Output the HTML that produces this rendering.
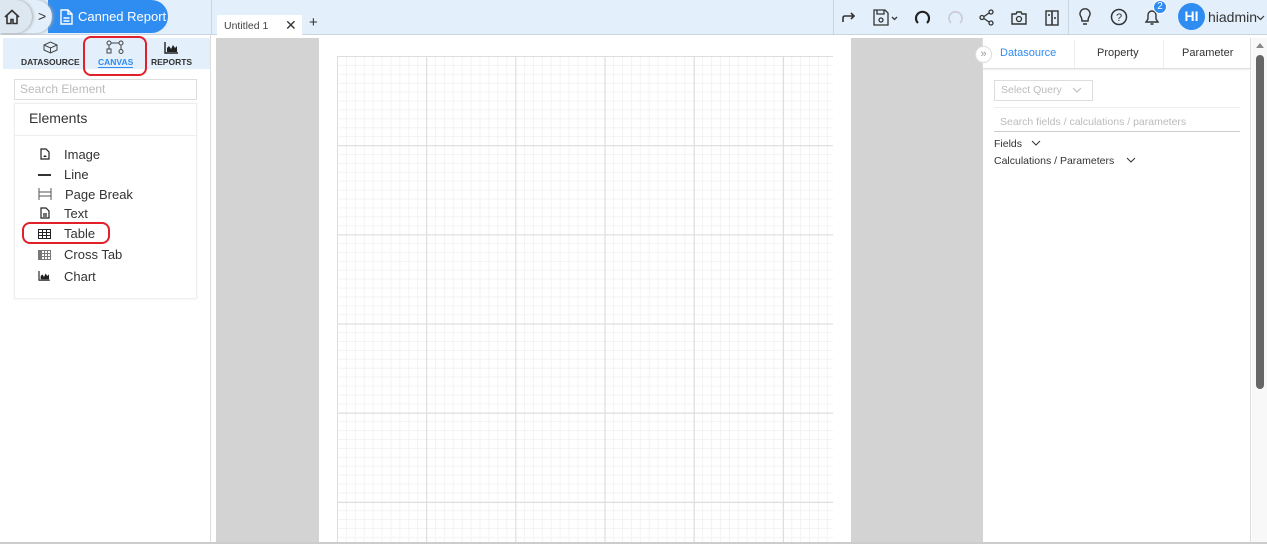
<!DOCTYPE html>
<html><head><meta charset="utf-8"><style>
*{box-sizing:border-box;margin:0;padding:0}
body{width:1267px;height:544px;overflow:hidden;background:#fff;font-family:"Liberation Sans",sans-serif;position:relative;color:#333}
.abs{position:absolute}
.top{left:0;top:0;width:1267px;height:35px;background:#e3f0fb;border-bottom:1px solid #c9d6e2}
.left{left:0;top:35px;width:211px;height:509px;background:#fff;border-right:1px solid #ddd}
.el{position:absolute;left:64px;font-size:13px;color:#333}
.grid{left:337px;top:56px;width:496px;height:488px;border-left:1px solid #ddd;border-top:1px solid #ddd;
background-image:linear-gradient(#dcdcdc 1px,transparent 1px),linear-gradient(90deg,#dcdcdc 1px,transparent 1px),linear-gradient(#f3f3f3 1px,transparent 1px),linear-gradient(90deg,#f3f3f3 1px,transparent 1px);
background-size:89.2px 89.2px,89.2px 89.2px,8.92px 8.92px,8.92px 8.92px;background-position:-1px -1px}
</style></head><body>
<div class="abs top"></div>
<div class="abs" style="left:48px;top:0;width:120px;height:33px;border-radius:0 17px 17px 0;background:#2f8cf0"></div>
<div class="abs" style="left:0;top:0;width:52px;height:33px;border-radius:0 17px 17px 0;background:#e3f0fb;box-shadow:1px 0 3px #aaa"></div>
<div class="abs" style="left:0;top:0;width:32px;height:33px;border-radius:0 17px 17px 0;background:#dde7f0;box-shadow:1px 0 3px #aaa"></div>
<svg class="abs" style="left:3px;top:8px" width="18" height="18" viewBox="0 0 18 18"><path d="M2 9L9 2.5 16 9M4 7.5V15.5h4v-4h2v4h4V7.5" fill="none" stroke="#333" stroke-width="1.6"/></svg>
<div class="abs" style="left:38px;top:8px;font-size:14px;color:#333">&gt;</div>
<svg class="abs" style="left:60px;top:9px" width="13" height="16" viewBox="0 0 13 16"><path d="M1 1h7l4 4v10H1z M8 1v4h4 M3.5 9h6M3.5 12h6" fill="none" stroke="#fff" stroke-width="1.4"/></svg>
<div class="abs" style="left:78px;top:9px;font-size:13px;color:#fff;white-space:nowrap">Canned Report</div>
<div class="abs" style="left:211px;top:0;width:1px;height:35px;background:#c9d6e2"></div>
<div class="abs" style="left:217px;top:15px;width:85px;height:20px;background:#fff"></div>
<div class="abs" style="left:224px;top:20px;font-size:10.5px;color:#444">Untitled 1</div>
<div class="abs" style="left:285px;top:17px;font-size:14px;color:#333">✕</div>
<div class="abs" style="left:309px;top:14px;font-size:15px;color:#333">+</div>
<div class="abs" style="left:833px;top:0;width:1px;height:35px;background:#c9d6e2"></div>
<div class="abs" style="left:1068px;top:0;width:1px;height:35px;background:#c9d6e2"></div>
<svg class="abs" style="left:842px;top:11px" width="14" height="12" viewBox="0 0 14 12"><path d="M1 11V7q0-2 2-2h9M9 2l3 3-3 3" fill="none" stroke="#333" stroke-width="1.6"/></svg>
<svg class="abs" style="left:873px;top:9px" width="26" height="17" viewBox="0 0 26 17"><path d="M1 1h11l3 3v12H1z M4 1v4h7V1 M8 11m-2 0a2 2 0 1 0 4 0a2 2 0 1 0-4 0 M19 8l2.5 2.5L24 8" fill="none" stroke="#333" stroke-width="1.3"/></svg>
<svg class="abs" style="left:914px;top:9px" width="17" height="17" viewBox="0 0 17 17"><path d="M4 14A6.5 6.5 0 1 1 13 14" fill="none" stroke="#222" stroke-width="2.2"/></svg>
<svg class="abs" style="left:947px;top:9px" width="17" height="17" viewBox="0 0 17 17"><path d="M4 14A6.5 6.5 0 1 1 13 14" fill="none" stroke="#ccd" stroke-width="1.8"/></svg>
<svg class="abs" style="left:979px;top:9px" width="15" height="17" viewBox="0 0 15 17"><circle cx="12" cy="3" r="2" fill="none" stroke="#333" stroke-width="1.3"/><circle cx="3" cy="8.5" r="2" fill="none" stroke="#333" stroke-width="1.3"/><circle cx="12" cy="14" r="2" fill="none" stroke="#333" stroke-width="1.3"/><path d="M5 7.5l5-3.5M5 9.5l5 3.5" stroke="#333" stroke-width="1.3"/></svg>
<svg class="abs" style="left:1011px;top:11px" width="16" height="14" viewBox="0 0 16 14"><path d="M1 3h4l1-2h4l1 2h4v10H1z" fill="none" stroke="#333" stroke-width="1.4"/><circle cx="8" cy="8" r="2.5" fill="none" stroke="#333" stroke-width="1.3"/></svg>
<svg class="abs" style="left:1045px;top:10px" width="14" height="16" viewBox="0 0 14 16"><rect x="1" y="1" width="12" height="14" fill="none" stroke="#333" stroke-width="1.4"/><path d="M7 1v14M3 5h2M9 8l2 0" stroke="#333" stroke-width="1.6"/></svg>
<svg class="abs" style="left:1078px;top:8px" width="14" height="19" viewBox="0 0 14 19"><path d="M4 13Q4 10 2.5 8A5 5 0 1 1 11.5 8Q10 10 10 13zM5 16h4" fill="none" stroke="#333" stroke-width="1.4"/></svg>
<svg class="abs" style="left:1110px;top:8px" width="18" height="18" viewBox="0 0 18 18"><circle cx="9" cy="9" r="7.5" fill="none" stroke="#333" stroke-width="1.5"/><text x="9" y="13" font-size="11" text-anchor="middle" fill="#333" font-family="Liberation Sans">?</text></svg>
<svg class="abs" style="left:1144px;top:8px" width="16" height="18" viewBox="0 0 16 18"><path d="M2 14h12l-2-3V7A4 4 0 0 0 4 7v4zM6.5 16h3" fill="none" stroke="#333" stroke-width="1.4"/></svg>
<div class="abs" style="left:1153px;top:0;width:14px;height:14px;border-radius:50%;background:#2f8cf0;border:1px solid #fff;color:#fff;font-size:10px;text-align:center;line-height:12px">2</div>
<div class="abs" style="left:1178px;top:3px;width:27px;height:27px;border-radius:50%;background:#2f8cf0;color:#fff;font-size:14px;font-weight:bold;text-align:center;line-height:27px">HI</div>
<div class="abs" style="left:1208px;top:9px;font-size:14px;color:#333">hiadmin</div>
<svg class="abs" style="left:1256px;top:15px" width="9" height="6" viewBox="0 0 9 6"><path d="M1 1l3.5 3.5L8 1" fill="none" stroke="#333" stroke-width="1.2"/></svg>
<div class="abs left"></div>
<div class="abs" style="left:3px;top:38px;width:207px;height:31px;background:#e3f0fb"></div>
<svg class="abs" style="left:43px;top:41px" width="15" height="13" viewBox="0 0 15 13"><path d="M1 4l6.5-3 6.5 3v5l-6.5 3L1 9z M1 4l6.5 3 6.5-3 M7.5 7v5" fill="none" stroke="#444" stroke-width="1"/></svg>
<div class="abs" style="left:21px;top:57px;font-size:8.5px;font-weight:bold;color:#333">DATASOURCE</div>
<svg class="abs" style="left:106px;top:40px" width="18" height="15" viewBox="0 0 18 15"><circle cx="3" cy="3" r="2" fill="none" stroke="#444"/><circle cx="15" cy="3" r="2" fill="none" stroke="#444"/><path d="M5 3h8M3 5v4M15 5v4" stroke="#444"/><rect x="1" y="9" width="4" height="4" fill="none" stroke="#444"/><circle cx="15" cy="11.5" r="2" fill="none" stroke="#444"/></svg>
<div class="abs" style="left:98px;top:57px;font-size:8.5px;font-weight:bold;color:#2f8cf0">CANVAS</div>
<div class="abs" style="left:98px;top:67px;width:35px;height:1px;background:#2f8cf0"></div>
<div class="abs" style="left:83px;top:36px;width:64px;height:40px;border:2px solid #e2202a;border-radius:8px"></div>
<svg class="abs" style="left:164px;top:42px" width="14" height="12" viewBox="0 0 14 12"><path d="M1 0v11h13" stroke="#222" stroke-width="1.4" fill="none"/><path d="M3 10V6l2-2 2 3 2-4 2 3 2-2v6z" fill="#222"/></svg>
<div class="abs" style="left:151px;top:57px;font-size:8.5px;font-weight:bold;color:#333">REPORTS</div>
<div class="abs" style="left:14px;top:79px;width:183px;height:21px;border:1px solid #ddd"></div>
<div class="abs" style="left:20px;top:82px;font-size:12px;color:#bbb">Search Element</div>
<div class="abs" style="left:14px;top:103px;width:183px;height:196px;border:1px solid #eee;box-shadow:0 0 2px #eee"></div>
<div class="abs" style="left:14px;top:135px;width:183px;height:1px;background:#eee"></div>
<div class="abs" style="left:29px;top:110px;font-size:14px;color:#333">Elements</div>
<svg class="abs" style="left:40px;top:148px" width="10" height="12" viewBox="0 0 10 12"><path d="M1 1h5l3 3v7H1z" fill="none" stroke="#222" stroke-width="1.2"/><path d="M3 9l2-2 2 2z" fill="#222"/></svg>
<div class="el" style="top:147px">Image</div>
<div class="abs" style="left:38px;top:174px;width:13px;height:1.5px;background:#333"></div>
<div class="el" style="top:167px">Line</div>
<svg class="abs" style="left:38px;top:188px" width="14" height="12" viewBox="0 0 14 12"><path d="M1 0v12M13 0v12M1 4h12M1 8h12" stroke="#555" stroke-width="1"/></svg>
<div class="el" style="left:65px;top:187px">Page Break</div>
<svg class="abs" style="left:40px;top:207px" width="10" height="12" viewBox="0 0 10 12"><path d="M1 1h5l3 3v7H1z M3 7h4M3 9h4" fill="none" stroke="#222" stroke-width="1.2"/></svg>
<div class="el" style="top:206px">Text</div>
<svg class="abs" style="left:38px;top:229px" width="13" height="10" viewBox="0 0 13 10"><rect x=".5" y=".5" width="12" height="9" fill="none" stroke="#222"/><path d="M.5 3.5h12M.5 6.5h12M4.5 .5v9M8.5 .5v9" stroke="#222"/></svg>
<div class="el" style="top:226px">Table</div>
<div class="abs" style="left:22px;top:222px;width:88px;height:22px;border:2px solid #e2202a;border-radius:8px"></div>
<svg class="abs" style="left:38px;top:250px" width="13" height="10" viewBox="0 0 13 10"><rect x=".5" y=".5" width="12" height="9" fill="none" stroke="#777"/><path d="M.5 3.5h12M.5 6.5h12M3.5 .5v9M6.5 .5v9M9.5 .5v9" stroke="#777"/><rect x="0" y="0" width="3" height="10" fill="#777"/></svg>
<div class="el" style="top:247px">Cross Tab</div>
<svg class="abs" style="left:38px;top:271px" width="12" height="10" viewBox="0 0 14 12"><path d="M1 0v11h13" stroke="#222" stroke-width="1.4" fill="none"/><path d="M3 10V6l2-2 2 3 2-4 2 3 2-2v6z" fill="#222"/></svg>
<div class="el" style="top:269px">Chart</div>
<div class="abs" style="left:216px;top:38px;width:767px;height:506px;background:#d3d3d3"></div>
<div class="abs" style="left:319px;top:38px;width:532px;height:506px;background:#fff"></div>
<div class="abs grid"></div>
<div class="abs" style="left:983px;top:38px;width:268px;height:506px;background:#fff;border-right:1px solid #ddd"></div>
<div class="abs" style="left:983px;top:38px;width:268px;height:31px;border-bottom:1px solid #ddd;box-shadow:0 1px 2px #eee"></div>
<div class="abs" style="left:1074px;top:40px;width:1px;height:28px;background:#eee"></div>
<div class="abs" style="left:1163px;top:40px;width:1px;height:28px;background:#eee"></div>
<div class="abs" style="left:975px;top:46px;width:17px;height:17px;border-radius:50%;background:#fff;border:1px solid #ddd;font-size:11px;color:#999;text-align:center;line-height:14px">»</div>
<div class="abs" style="left:1000px;top:47px;font-size:11px;color:#2f8cf0">Datasource</div>
<div class="abs" style="left:1097px;top:47px;font-size:11px;color:#333">Property</div>
<div class="abs" style="left:1182px;top:47px;font-size:11px;color:#333">Parameter</div>
<div class="abs" style="left:994px;top:80px;width:99px;height:21px;border:1px solid #ddd"></div>
<div class="abs" style="left:1001px;top:84px;font-size:10.5px;color:#bbb">Select Query</div>
<svg class="abs" style="left:1072px;top:87px" width="10" height="6" viewBox="0 0 10 6"><path d="M1 1l4 4 4-4" fill="none" stroke="#bbb"/></svg>
<div class="abs" style="left:994px;top:107px;width:246px;height:1px;background:#eee"></div>
<div class="abs" style="left:1000px;top:116px;font-size:10.5px;color:#bbb">Search fields / calculations / parameters</div>
<div class="abs" style="left:994px;top:131px;width:246px;height:1px;background:#ccc"></div>
<div class="abs" style="left:994px;top:138px;font-size:10.5px;color:#333">Fields</div>
<svg class="abs" style="left:1031px;top:140px" width="10" height="6" viewBox="0 0 10 6"><path d="M1 1l4 4 4-4" fill="none" stroke="#333"/></svg>
<div class="abs" style="left:994px;top:155px;font-size:10.5px;color:#333">Calculations / Parameters</div>
<svg class="abs" style="left:1126px;top:157px" width="10" height="6" viewBox="0 0 10 6"><path d="M1 1l4 4 4-4" fill="none" stroke="#333"/></svg>
<div class="abs" style="left:1252px;top:38px;width:15px;height:506px;background:#f8f8f8"></div>
<div class="abs" style="left:1256px;top:43px;width:0;height:0;border-left:4px solid transparent;border-right:4px solid transparent;border-bottom:5px solid #888"></div>
<div class="abs" style="left:1256px;top:55px;width:8px;height:334px;border-radius:4px;background:#666"></div>
<div class="abs" style="left:0;top:542px;width:1267px;height:2px;background:#ccc"></div>
</body></html>
